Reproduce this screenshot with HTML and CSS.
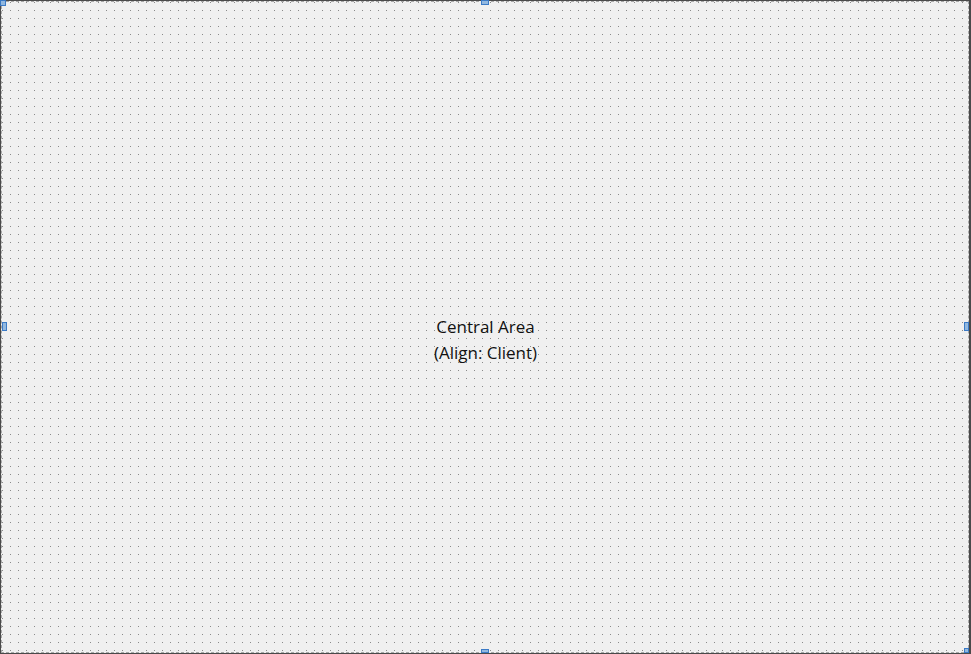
FILE: index.html
```html
<!DOCTYPE html>
<html>
<head>
<meta charset="utf-8">
<link rel="stylesheet" href="styles.css">
</head>
<body>
<div class="frame">
  <div class="canvas">
    <div class="label">
      <div>Central Area</div>
      <div>(Align: Client)</div>
    </div>
  </div>
  <span class="handle h-tl"></span>
  <span class="handle h-t"></span>
  <span class="handle h-l"></span>
  <span class="handle h-r"></span>
  <span class="handle h-b"></span>
  <span class="handle h-br"></span>
</div>
</body>
</html>
```
FILE: styles.css
```css
html, body {
  margin: 0;
  padding: 0;
  width: 971px;
  height: 654px;
  overflow: hidden;
  background: #f0f0f0;
}

.frame {
  position: relative;
  box-sizing: border-box;
  width: 971px;
  height: 654px;
  border-style: solid;
  border-color: #4a4a4a;
  border-width: 1px 2px 1px 1px;
  display: flex;
}

.canvas {
  flex: 1;
  box-sizing: border-box;
  border: 1px dashed #a8a8a8;
  background-color: #f0f0f0;
  background-image: conic-gradient(at 1px 1px, transparent 75%, #8a8a8a 0);
  background-size: 8px 8px;
  background-position: 0 0;
  display: flex;
  align-items: center;
  justify-content: center;
}

.label {
  font-family: "Open Sans", "Noto Sans", sans-serif;
  font-size: 17px;
  line-height: 26px;
  color: #111;
  text-align: center;
  margin-left: 1px;
  margin-top: 26px;
}

.handle {
  position: absolute;
  box-sizing: border-box;
  background: #92b8df;
  border: 1px solid #3b7ac6;
}

.h-tl { left: -1px; top: -1px; width: 6px; height: 6px; }
.h-t  { left: 480px; top: -1px; width: 8px; height: 5px; }
.h-l  { left: 1px; top: 321px; width: 5px; height: 9px; }
.h-r  { right: 0px; top: 321px; width: 5px; height: 9px; }
.h-b  { left: 480px; bottom: 0px; width: 8px; height: 4px; }
.h-br { right: 0px; bottom: 0px; width: 5px; height: 5px; }
```
